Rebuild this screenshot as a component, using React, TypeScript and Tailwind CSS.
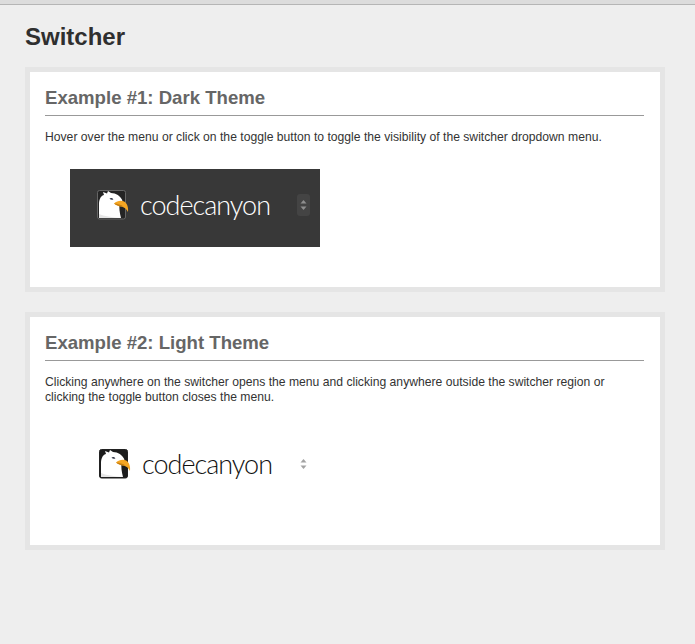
const sans = { fontFamily: '"Liberation Sans", Arial, sans-serif' };

type LogoProps = {
  dark?: boolean;
};

function EagleIcon({ dark = false }: LogoProps): React.JSX.Element {
  return (
    <svg width="32" height="30" viewBox="0 0 32 30" className="shrink-0">
      <rect x="0.5" y="0.5" width="28" height="28.5" rx="2" fill={dark ? "#242424" : "#1c1c1c"} stroke={dark ? "#666" : "#222"} />
      <path
        d="M2 28 L2 13 C2.5 8 4.5 5.5 7 5 L6 2 L10 3.6 L11 1 L14 3 C19 3 23.5 6 25.5 10.5 L22.5 13 C22 17 22.5 23 24 28 Z"
        fill="#fff"
      />
      <path d="M2 28 L2 24 C7 26 15 27.4 24 28 Z" fill="#e6e6e6" />
      <path d="M12.5 8.6 C13.6 7.6 15.4 7.8 16.4 9.4 C15 10.2 13.6 10 12.5 8.6 Z" fill="#33394a" />
      <path
        d="M17 13.4 C20 10.6 24.5 10 27.2 11.6 C30 13.4 31.6 17 31 22 C29.6 19 27.2 17.2 24.2 16.6 C21.6 16 19.2 15.2 17 13.4 Z"
        fill="#f5a623"
      />
      <path d="M17 13.4 C20.5 13.8 24 14.4 26.6 16.4 L24.2 16.6 C21.6 16 19.2 15.2 17 13.4 Z" fill="#c77f12" />
    </svg>
  );
}

function Toggle({ dark = false }: LogoProps): React.JSX.Element {
  const color = dark ? "#8f8f8f" : "#a3a3a3";
  return (
    <div className={`flex h-[22px] w-[13px] items-center justify-center rounded-[3px] ${dark ? "bg-[#444444]" : ""}`}>
      <svg width="7" height="12" viewBox="0 0 7 12">
        <path d="M3.5 1 L6.5 4.5 L0.5 4.5 Z" fill={color} />
        <path d="M3.5 11 L6.5 7.5 L0.5 7.5 Z" fill={color} />
      </svg>
    </div>
  );
}

export default function App(): React.JSX.Element {
  return (
    <div className="min-h-[644px] bg-[#eeeeee] text-[#333333]" style={sans}>
      <div className="h-[5px] border-b border-[#b5b5b5] bg-[#dcdcdc]" />
      <div className="pr-[30px] pl-[25px]">
        <h1 className="pt-[17px] pb-[16px] text-[24px] leading-[29px] font-bold text-[#2f2f2f]">Switcher</h1>

        {/* Example 1 */}
        <section className="h-[225px] border-[5px] border-[#e5e5e5] bg-white pr-[16px] pl-[15px]">
          <h2 className="mt-[14px] border-b border-[#999999] pb-[6px] text-[18.6px] leading-[23px] font-bold text-[#666666]">
            Example #1: Dark Theme
          </h2>
          <p className="mt-[14px] text-[12.17px] leading-[15px]">
            Hover over the menu or click on the toggle button to toggle the visibility of the switcher dropdown menu.
          </p>
          <div className="mt-[24px] ml-[25px] flex h-[78px] w-[250px] items-center bg-[#383838] pr-[10px] pb-[6px] pl-[27px]">
            <EagleIcon dark />
            <span
              className="ml-[11px] flex-1 text-[27px] leading-[32px] font-light tracking-[-1px] text-white"
              style={{ fontFamily: "Lato, sans-serif" }}
            >
              codecanyon
            </span>
            <Toggle dark />
          </div>
        </section>

        {/* Example 2 */}
        <section className="mt-[20px] h-[238px] border-[5px] border-[#e5e5e5] bg-white pr-[16px] pl-[15px]">
          <h2 className="mt-[14px] border-b border-[#999999] pb-[6px] text-[18.6px] leading-[23px] font-bold text-[#666666]">
            Example #2: Light Theme
          </h2>
          <p className="mt-[14px] text-[12.17px] leading-[15px]">
            Clicking anywhere on the switcher opens the menu and clicking anywhere outside the switcher region or clicking the toggle button closes the menu.
          </p>
          <div className="mt-[23px] ml-[25px] flex h-[78px] w-[250px] items-center pr-[10px] pb-[6px] pl-[29px]">
            <EagleIcon />
            <span
              className="ml-[11px] flex-1 text-[27px] leading-[32px] font-light tracking-[-1px] text-[#111111]"
              style={{ fontFamily: "Lato, sans-serif" }}
            >
              codecanyon
            </span>
            <Toggle />
          </div>
        </section>
      </div>
    </div>
  );
}
